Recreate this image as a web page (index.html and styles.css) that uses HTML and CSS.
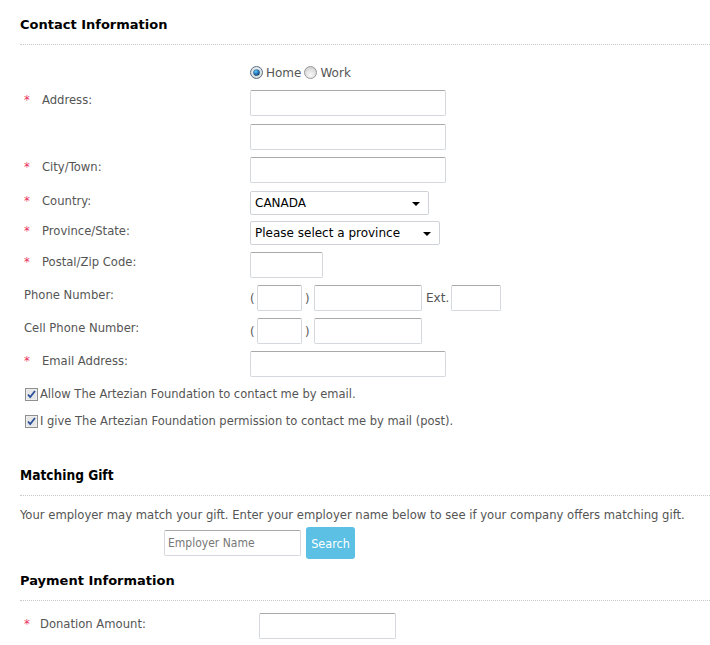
FILE: index.html
```html
<!DOCTYPE html>
<html>
<head>
<meta charset="utf-8">
<link rel="stylesheet" href="styles.css">
</head>
<body>
<div class="page">
  <section class="section">
    <h2 class="heading">Contact Information</h2>
    <div class="radio-row">
      <span class="radio checked"><svg width="13" height="13" viewBox="0 0 13 13"><defs><radialGradient id="rg1" cx="50%" cy="40%" r="60%"><stop offset="0" stop-color="#ffffff"/><stop offset="1" stop-color="#d4d4d4"/></radialGradient><radialGradient id="dot" cx="40%" cy="35%" r="70%"><stop offset="0" stop-color="#6fc3f0"/><stop offset="0.6" stop-color="#1b6eae"/><stop offset="1" stop-color="#0b3d66"/></radialGradient></defs><circle cx="6.5" cy="6.5" r="6" fill="url(#rg1)" stroke="#5a6f84"/><circle cx="6.5" cy="6.5" r="3.3" fill="url(#dot)"/></svg></span>
      <span class="radio-label">Home</span>
      <span class="radio"><svg width="13" height="13" viewBox="0 0 13 13"><defs><radialGradient id="rg2" cx="50%" cy="70%" r="70%"><stop offset="0" stop-color="#fafafa"/><stop offset="1" stop-color="#cfcfcf"/></radialGradient></defs><circle cx="6.5" cy="6.5" r="6" fill="url(#rg2)" stroke="#9a9a9a"/></svg></span>
      <span class="radio-label">Work</span>
    </div>

    <div class="row">
      <div class="label req"><span class="star">*</span>Address:</div>
      <div class="field stack">
        <input class="input w195" type="text">
        <input class="input w195" type="text">
      </div>
    </div>
    <div class="row">
      <div class="label req"><span class="star">*</span>City/Town:</div>
      <div class="field"><input class="input w195" type="text"></div>
    </div>
    <div class="row row-sel">
      <div class="label req"><span class="star">*</span>Country:</div>
      <div class="field"><span class="select w179">CANADA<span class="caret"></span></span></div>
    </div>
    <div class="row row-sel2">
      <div class="label req"><span class="star">*</span>Province/State:</div>
      <div class="field"><span class="select w190">Please select a province<span class="caret"></span></span></div>
    </div>
    <div class="row">
      <div class="label req"><span class="star">*</span>Postal/Zip Code:</div>
      <div class="field"><input class="input w73" type="text"></div>
    </div>
    <div class="row">
      <div class="label">Phone Number:</div>
      <div class="field phone">
        <span class="paren">(</span><input class="input w45" type="text"><span class="paren">)</span><input class="input w108" type="text"><span class="ext">Ext.</span><input class="input w50" type="text">
      </div>
    </div>
    <div class="row">
      <div class="label">Cell Phone Number:</div>
      <div class="field phone">
        <span class="paren">(</span><input class="input w45" type="text"><span class="paren">)</span><input class="input w108" type="text">
      </div>
    </div>
    <div class="row">
      <div class="label req"><span class="star">*</span>Email Address:</div>
      <div class="field"><input class="input w195" type="text"></div>
    </div>

    <div class="check-row">
      <span class="check"><svg width="13" height="13" viewBox="0 0 13 13"><rect x="0.5" y="0.5" width="12" height="12" fill="#f4f4f4" stroke="#8e8f8f"/><rect x="1.5" y="1.5" width="10" height="10" fill="#e6e6e6"/><path d="M3 6.5 L5.2 9 L10 3" fill="none" stroke="#2a4f9c" stroke-width="1.8"/></svg></span>
      <span>Allow The Artezian Foundation to contact me by email.</span>
    </div>
    <div class="check-row">
      <span class="check"><svg width="13" height="13" viewBox="0 0 13 13"><rect x="0.5" y="0.5" width="12" height="12" fill="#f4f4f4" stroke="#8e8f8f"/><rect x="1.5" y="1.5" width="10" height="10" fill="#e6e6e6"/><path d="M3 6.5 L5.2 9 L10 3" fill="none" stroke="#2a4f9c" stroke-width="1.8"/></svg></span>
      <span>I give The Artezian Foundation permission to contact me by mail (post).</span>
    </div>
  </section>

  <section class="section gift">
    <h2 class="heading cond">Matching Gift</h2>
    <p class="gift-text">Your employer may match your gift. Enter your employer name below to see if your company offers matching gift.</p>
    <div class="gift-search">
      <input class="input employer" type="text" placeholder="Employer Name">
      <button class="btn-search" type="button">Search</button>
    </div>
  </section>

  <section class="section pay">
    <h2 class="heading">Payment Information</h2>
    <div class="row donation">
      <div class="label req"><span class="star">*</span>Donation Amount:</div>
      <div class="field"><input class="input w137" type="text"></div>
    </div>
  </section>
</div>
</body>
</html>
```
FILE: styles.css
```css
html, body {
  margin: 0;
  padding: 0;
  background: #fff;
}
body {
  font-family: "DejaVu Sans", Verdana, sans-serif;
  font-size: 11.6px;
  color: #555;
}
.page {
  padding-left: 20px;
}
.heading {
  margin: 0;
  font-size: 13px;
  font-weight: bold;
  color: #000;
  line-height: 16px;
  padding-top: 17px;
  padding-bottom: 11px;
  border-bottom: 1px dotted #c8c8c8;
}
.radio-row {
  display: flex;
  align-items: center;
  margin-left: 230px;
  margin-top: 20px;
  height: 15px;
  font-size: 12px;
}
.radio {
  display: inline-flex;
  width: 13px;
  height: 13px;
  margin-right: 3px;
}
.radio-label {
  margin-right: 3px;
  color: #555;
}
.row {
  display: flex;
  align-items: flex-start;
  margin-top: 10px;
}
.row + .row {
  margin-top: 7px;
}
.label {
  width: 230px;
  flex: none;
  padding-top: 3px;
  line-height: 14px;
  padding-left: 4px;
  box-sizing: border-box;
}
.star {
  display: inline-block;
  width: 18px;
  color: #e8335a;
}
.field {
  display: flex;
  align-items: center;
}
.stack {
  flex-direction: column;
  align-items: flex-start;
  gap: 8px;
}
.input {
  height: 26px;
  box-sizing: border-box;
  border: 1px solid #d5d8dd;
  border-top-color: #a9a9a9;
  border-radius: 2px;
  background: #fff;
  padding: 0 4px;
  margin: 0;
  font: inherit;
}
.w195 { width: 196px; }
.w179 { width: 179px; }
.w190 { width: 190px; }
.w73 { width: 73px; }
.w45 { width: 45px; }
.w108 { width: 108px; }
.w50 { width: 50px; }
.w137 { width: 137px; }
.select {
  position: relative;
  display: flex;
  align-items: center;
  height: 24px;
  box-sizing: border-box;
  border: 1px solid #cfd3d8;
  border-radius: 2px;
  padding-left: 4px;
  color: #000;
  font-size: 12px;
}
.caret {
  position: absolute;
  right: 8px;
  top: 10px;
  width: 0;
  height: 0;
  border-left: 4px solid transparent;
  border-right: 4px solid transparent;
  border-top: 4px solid #000;
}
.row-sel { margin-top: 8px !important; }
.row-sel2 { margin-top: 6px !important; }
.paren {
  color: #555;
  width: 7px;
}
.phone .paren:nth-child(3) {
  width: 12px;
  padding-left: 3px;
  box-sizing: border-box;
}
.ext {
  padding: 0 2px 0 4px;
  font-size: 12px;
}
.check-row {
  display: flex;
  align-items: center;
  margin-top: 9px;
  height: 16px;
  font-size: 11.5px;
  padding-left: 5px;
}
.check-row + .check-row {
  margin-top: 11px;
}
.check {
  display: inline-flex;
  width: 13px;
  height: 13px;
  margin-right: 2px;
}
.gift .heading {
  padding-top: 38px;
  padding-bottom: 12px;
}
.cond {
  font-family: "DejaVu Sans Condensed", "DejaVu Sans", sans-serif;
  font-size: 13.6px;
  font-stretch: condensed;
}
.gift-text {
  margin: 11px 0 0;
  font-family: "DejaVu Sans Condensed", "DejaVu Sans", sans-serif;
  font-stretch: condensed;
  font-size: 12.9px;
  line-height: 16px;
}
.gift-search {
  display: flex;
  align-items: center;
  margin-left: 144px;
  margin-top: 4px;
  gap: 5px;
}
.employer {
  width: 137px;
  font-family: "DejaVu Sans Condensed", "DejaVu Sans", sans-serif;
  font-stretch: condensed;
  font-size: 12px;
  padding-left: 3px;
}
.employer::placeholder {
  color: #777;
}
.btn-search {
  height: 32px;
  width: 49px;
  border: none;
  border-radius: 3px;
  background: #5bc0e4;
  color: #fff;
  font-family: "DejaVu Sans Condensed", "DejaVu Sans", sans-serif;
  font-stretch: condensed;
  font-size: 12.5px;
  padding: 0;
}
.pay .heading {
  padding-top: 14px;
}
.donation {
  margin-top: 12px !important;
}
.donation .label {
  width: 239px;
  padding-top: 4px;
}
.donation .star {
  width: 16px;
}
```
